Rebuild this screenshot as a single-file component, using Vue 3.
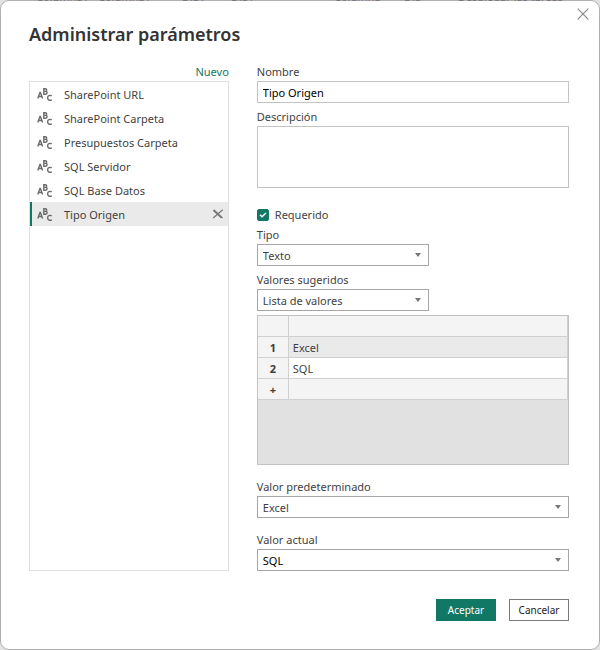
<script setup>
import { ref } from 'vue'

const backdrop = [
  { text: 'Columna1', x: 36 },
  { text: 'Columna1', x: 98 },
  { text: 'Día1', x: 182 },
  { text: 'Día1', x: 231 },
  { text: 'Columna', x: 334 },
  { text: 'Día', x: 404 },
  { text: 'Desplegar las tareas', x: 458 },
]

const params = [
  'SharePoint URL',
  'SharePoint Carpeta',
  'Presupuestos Carpeta',
  'SQL Servidor',
  'SQL Base Datos',
  'Tipo Origen',
]
const selected = ref(5)
const name = ref('Tipo Origen')
const description = ref('')
const required = ref(true)
const type = ref('Texto')
const suggested = ref('Lista de valores')
const values = ref(['Excel', 'SQL'])
const defaultValue = ref('Excel')
const currentValue = ref('SQL')
</script>

<template>
  <div class="page">
    <div class="backdrop" aria-hidden="true">
      <span v-for="(b, i) in backdrop" :key="i" :style="{ left: b.x + 'px' }">{{ b.text }}</span>
    </div>
    <main class="dialog" role="dialog" aria-labelledby="title">
      <button class="close" type="button" aria-label="Cerrar">
        <svg width="12" height="12" viewBox="0 0 12 12"><path d="M.7 .7 11.3 11.3M11.3 .7 .7 11.3" /></svg>
      </button>
      <h1 id="title">Administrar parámetros</h1>
      <div class="columns">
        <section class="side">
          <a class="new" href="#">Nuevo</a>
          <ul class="list">
            <li v-for="(p, i) in params" :key="p" :class="{ active: i === selected }">
              <button class="item" type="button" @click="selected = i">
                <svg class="abc" width="16" height="16" viewBox="0 0 16 16">
                  <path d="M.8 11.500 3 5.500h.4L5.600 11.500M1.600 9.500h3.200" />
                  <path d="M6.800 1.700v5.600h1.700c2.200 0 2.200-2.900 0-2.900H6.800h1.500c1.900 0 1.900-2.700 0-2.700z" />
                  <path d="M14.800 8.900c-2-1.200-4.200-.2-4.200 1.900s2.200 3.200 4.200 2" />
                </svg>
                <span>{{ p }}</span>
              </button>
              <button v-if="i === selected" class="delete" type="button" aria-label="Eliminar">
                <svg width="12" height="10" viewBox="0 0 12 10">
                  <path class="thick" d="M1.500 1 9.500 8.500" />
                  <path d="M10.700 .8 1.200 9M9 8 10.700 9" />
                </svg>
              </button>
            </li>
          </ul>
        </section>

        <form class="form" @submit.prevent>
          <div class="field">
            <label for="name">Nombre</label>
            <input id="name" v-model="name" class="control dark" type="text" />
          </div>
          <div class="field">
            <label for="desc">Descripción</label>
            <textarea id="desc" v-model="description" class="control area"></textarea>
          </div>
          <label class="check">
            <input v-model="required" type="checkbox" />
            <svg width="12" height="12" viewBox="0 0 12 12"><path d="M3 5.800l2 2 4-3.800" /></svg>
            <span>Requerido</span>
          </label>
          <div class="field half">
            <label for="type">Tipo</label>
            <div class="select">
              <select id="type" v-model="type" class="control"><option>Texto</option></select>
              <svg width="6" height="4" viewBox="0 0 6 4"><path d="M0 0h6L3 4z" /></svg>
            </div>
          </div>
          <div class="field half">
            <label for="sug">Valores sugeridos</label>
            <div class="select">
              <select id="sug" v-model="suggested" class="control"><option>Lista de valores</option></select>
              <svg width="6" height="4" viewBox="0 0 6 4"><path d="M0 0h6L3 4z" /></svg>
            </div>
          </div>
          <div class="grid">
            <table aria-label="Lista de valores">
              <thead>
                <tr><th></th><td></td></tr>
              </thead>
              <tbody>
                <tr v-for="(v, i) in values" :key="v" :class="{ current: i === 0 }">
                  <th scope="row">{{ i + 1 }}</th>
                  <td>{{ v }}</td>
                </tr>
                <tr class="add"><th scope="row">+</th><td></td></tr>
              </tbody>
            </table>
          </div>
          <div class="field spaced">
            <label for="def">Valor predeterminado</label>
            <div class="select">
              <select id="def" v-model="defaultValue" class="control"><option v-for="v in values" :key="v">{{ v }}</option></select>
              <svg width="6" height="4" viewBox="0 0 6 4"><path d="M0 0h6L3 4z" /></svg>
            </div>
          </div>
          <div class="field">
            <label for="cur">Valor actual</label>
            <div class="select">
              <select id="cur" v-model="currentValue" class="control dark"><option v-for="v in values" :key="v">{{ v }}</option></select>
              <svg width="6" height="4" viewBox="0 0 6 4"><path d="M0 0h6L3 4z" /></svg>
            </div>
          </div>
        </form>
      </div>
      <footer>
        <button class="btn primary" type="button">Aceptar</button>
        <button class="btn" type="button">Cancelar</button>
      </footer>
    </main>
  </div>
</template>

<style>
body {
  background: #e3e3e3;
}
</style>

<style scoped>
* {
  box-sizing: border-box;
}
.page {
  position: relative;
  min-height: 100vh;
  display: flex;
  font: 11px/16px "Noto Sans", "Open Sans", sans-serif;
  color: #3f3f3f;
}
button,
input,
select,
textarea {
  font: inherit;
  color: inherit;
  margin: 0;
}
.backdrop {
  position: absolute;
  z-index: 1;
  inset: 0 0 auto;
  height: 1px;
  overflow: hidden;
  color: #77707a;
}
.backdrop span {
  position: absolute;
  bottom: -4px;
  white-space: nowrap;
}
.dialog {
  position: relative;
  flex: 1;
  border: 1px solid #b0b0b0;
  border-radius: 9px;
  background: #fff;
  padding: 20px 30px 28px 28px;
}
.close {
  position: absolute;
  top: 7px;
  right: 10px;
  width: 12px;
  height: 12px;
  padding: 0;
  border: 0;
  background: none;
}
svg {
  display: block;
  fill: none;
}
.close svg {
  stroke: #8a8a8a;
  stroke-width: 1.2;
}
h1 {
  margin: 0;
  font-size: 18px;
  line-height: 26px;
  font-weight: 600;
  color: #333;
}
.columns {
  display: flex;
  gap: 28px;
  margin-top: 17px;
}
.side {
  width: 37%;
  display: flex;
  flex-direction: column;
}
.new {
  align-self: flex-end;
  color: #117865;
  text-decoration: none;
  margin-bottom: 1px;
}
.list {
  flex: 1;
  margin: 0;
  padding: 0;
  list-style: none;
  border: 1px solid #dfdfdf;
}
li {
  display: flex;
  align-items: center;
  height: 24px;
  border-left: 2px solid transparent;
}
li.active {
  background: #eaeaea;
  border-color: #117865;
}
.item {
  flex: 1;
  display: flex;
  align-items: center;
  gap: 11px;
  padding: 2px 0 0 5px;
  border: 0;
  background: none;
  text-align: left;
}
.abc {
  stroke: #6b6b6b;
  stroke-width: 1.4;
}
.delete {
  padding: 0 4px;
  border: 0;
  background: none;
}
.delete svg {
  stroke: #777;
  stroke-width: 1.2;
}
.delete .thick {
  stroke-width: 2;
}
.form {
  flex: 1;
  display: flex;
  flex-direction: column;
}
.field {
  display: flex;
  flex-direction: column;
  gap: 1px;
  margin-bottom: 6px;
}
.field:last-child {
  margin-bottom: 0;
}
.half {
  width: 55%;
}
.control {
  width: 100%;
  height: 22px;
  padding: 1px 5px 0;
  border: 1px solid #a6a6a6;
  border-radius: 0;
  background: #fff;
  outline: 0;
  appearance: none;
}
.field > .control {
  border-color: #c3c3c3;
}
.dark {
  color: #000;
}
.area {
  height: 62px;
  resize: none;
}
.select {
  position: relative;
}
.select svg {
  position: absolute;
  right: 8px;
  top: 9px;
  fill: #777;
  pointer-events: none;
}
.check {
  position: relative;
  display: flex;
  align-items: center;
  gap: 6px;
  margin: 13px 0 4px;
}
.check input {
  appearance: none;
  width: 12px;
  height: 12px;
  border: 1px solid #117865;
  border-radius: 2px;
}
.check input:checked {
  background: #117865;
}
.check svg {
  position: absolute;
  left: 0;
  stroke: #fff;
  stroke-width: 1.5;
  pointer-events: none;
}
.grid {
  height: 150px;
  margin: -2px 0 14px;
  border: 1px solid #c3c3c3;
  background: #e1e1e1;
}
table {
  width: 100%;
  border-spacing: 0;
  table-layout: fixed;
}
th,
td {
  height: 21px;
  padding: 1px 4px 0;
  border: solid #d0d0d0;
  border-width: 0 1px 1px 0;
  background: #f4f4f4;
  text-align: left;
}
th {
  width: 31px;
  text-align: center;
  font-weight: 700;
}
tbody td {
  background: #fff;
}
.current td {
  background: #eaeaea;
}
.add td {
  background: #f4f4f4;
}
.spaced {
  margin-bottom: 14px;
}
footer {
  display: flex;
  justify-content: flex-end;
  gap: 13px;
  margin-top: 28px;
}
.btn {
  width: 60px;
  height: 22px;
  padding: 0;
  border: 1px solid #7a7a7a;
  background: #fff;
  color: #222;
  font-size: 10px;
}
.primary {
  border-color: #117865;
  background: #117865;
  color: #fff;
}
</style>
